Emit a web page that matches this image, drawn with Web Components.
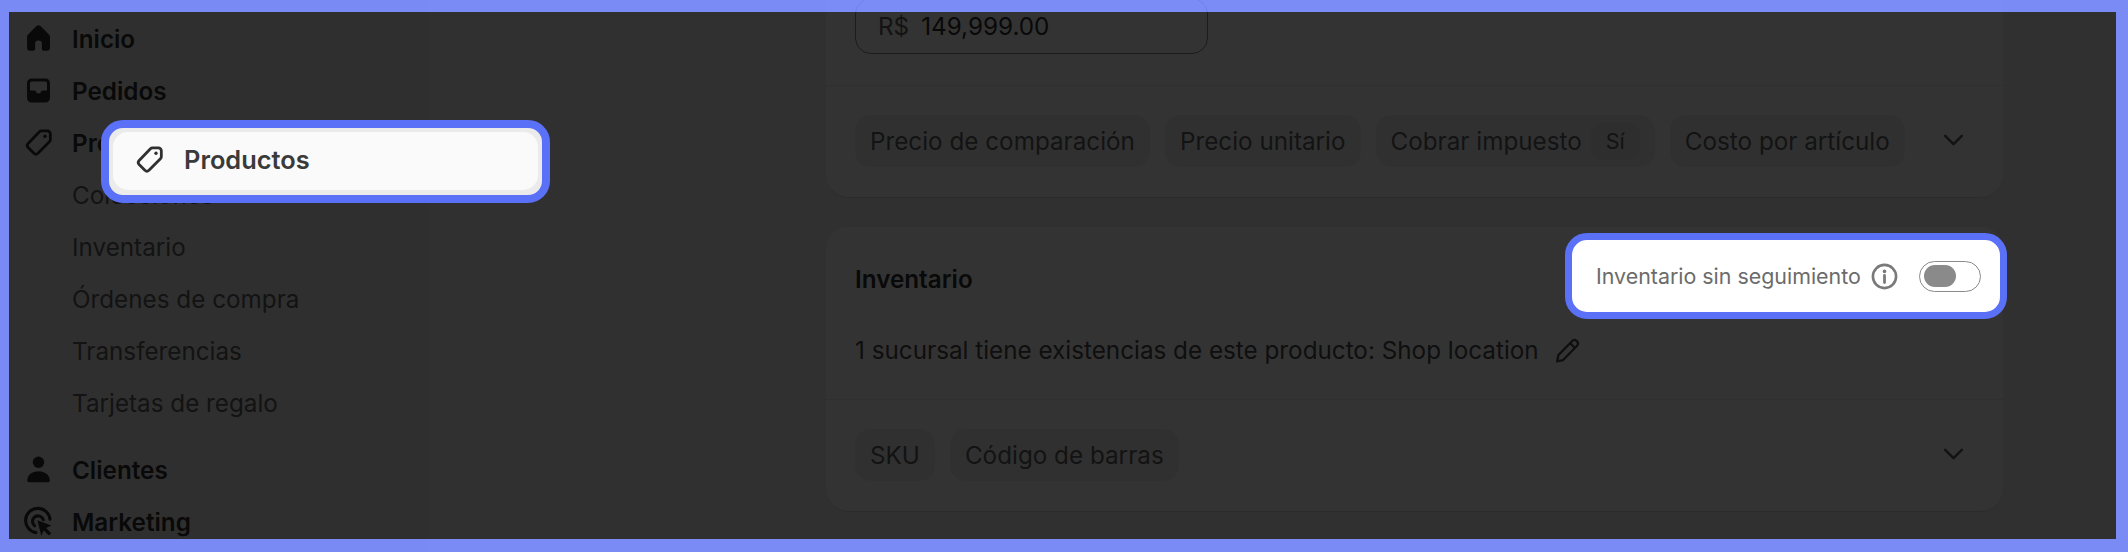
<!DOCTYPE html>
<html lang="es">
<head>
<meta charset="utf-8">
<title>Inventario</title>
<style>
  html, body { margin: 0; padding: 0; background: #f1f1f1; }
</style>
</head>
<body>

<tour-stage>
  <nav-sidebar slot="side">
    <nav-item strong icon="home">Inicio</nav-item>
    <nav-item strong icon="inbox">Pedidos</nav-item>
    <nav-item strong icon="tag">Productos</nav-item>
    <nav-item>Colecciones</nav-item>
    <nav-item>Inventario</nav-item>
    <nav-item>Órdenes de compra</nav-item>
    <nav-item>Transferencias</nav-item>
    <nav-item>Tarjetas de regalo</nav-item>
    <nav-item strong gap icon="person">Clientes</nav-item>
    <nav-item strong icon="target">Marketing</nav-item>
  </nav-sidebar>

  <product-card>
    <card-section first>
      <price-input currency="R$" value="149,999.00"></price-input>
    </card-section>
    <card-section divided>
      <chip-row>
        <pill-chip>Precio de comparación</pill-chip>
        <pill-chip>Precio unitario</pill-chip>
        <pill-chip badge="Sí">Cobrar impuesto</pill-chip>
        <pill-chip>Costo por artículo</pill-chip>
      </chip-row>
    </card-section>
  </product-card>

  <product-card>
    <card-section first tight>
      <inventory-head>Inventario</inventory-head>
      <inventory-line>1 sucursal tiene existencias de este producto: Shop location</inventory-line>
    </card-section>
    <card-section divided>
      <chip-row>
        <pill-chip>SKU</pill-chip>
        <pill-chip>Código de barras</pill-chip>
      </chip-row>
    </card-section>
  </product-card>

  <nav-callout slot="over">Productos</nav-callout>
  <toggle-callout slot="over">Inventario sin seguimiento</toggle-callout>
</tour-stage>

<script>
const ICONS = {
  home: `<path fill="currentColor" d="M8.6 3.5a2 2 0 0 1 2.8 0l4.1 4.2c.4.4.7.9.7 1.4v5.9a1.6 1.6 0 0 1-1.6 1.6h-1.8a1 1 0 0 1-1-1v-2.7a1.8 1.8 0 0 0-3.6 0v2.7a1 1 0 0 1-1 1H5.4a1.6 1.6 0 0 1-1.6-1.6V9.1c0-.5.3-1 .7-1.4z"/>`,
  inbox: `<path fill="currentColor" fill-rule="evenodd" d="M6.2 3.5h7.6a2.4 2.4 0 0 1 2.4 2.4v8.2a2.4 2.4 0 0 1-2.4 2.4H6.2a2.4 2.4 0 0 1-2.4-2.4V5.9a2.4 2.4 0 0 1 2.4-2.4zM6.3 5.1a.9.9 0 0 0-.9.9v4h2.8l1 1.5h1.6l1-1.5h2.8V6a.9.9 0 0 0-.9-.9z"/>`,
  tag: `<path fill="none" stroke="currentColor" stroke-width="1.5" stroke-linejoin="round" d="M11.6 3.7h3.2a1.6 1.6 0 0 1 1.6 1.6v3.2a1.6 1.6 0 0 1-.5 1.1l-6.2 6.2a1.6 1.6 0 0 1-2.2 0l-3.1-3.1a1.6 1.6 0 0 1 0-2.2l6.1-6.3a1.6 1.6 0 0 1 1.1-.5z"/><circle cx="13.5" cy="6.6" r=".9" fill="currentColor"/>`,
  person: `<circle cx="10" cy="6.1" r="3.1" fill="currentColor"/><path fill="currentColor" d="M3.9 15.9c0-3.1 2.7-5 6.1-5s6.1 1.9 6.1 5c0 .6-.4 1-1 1H4.9c-.6 0-1-.4-1-1z"/>`,
  target: `<path fill="none" stroke="currentColor" stroke-width="1.7" stroke-linecap="round" d="M8.6 16A6.6 6.6 0 1 1 16.2 8.8"/><path fill="none" stroke="currentColor" stroke-width="1.7" stroke-linecap="round" d="M7.9 12.3A3 3 0 1 1 12.6 9"/><path fill="currentColor" d="M9.4 9.3l7.6 2.9-2.9 1.3 2.8 2.8-1.3 1.3-2.8-2.8-1.3 2.9z"/>`
};

class TourStage extends HTMLElement {
  constructor() {
    super();
    this.attachShadow( {mode: 'open'} ).innerHTML = `
    <style>
    :host {
      display: block;
      position: relative;
      width: 2128px;
      height: 552px;
      overflow: hidden;
      font-family: Inter, 'Liberation Sans', sans-serif;
      color: #303030;
      background: #f1f1f1;
    }
    div.page {
      display: grid;
      grid-template-columns: 427px 1fr;
      height: 552px;
    }
    div.main {
      display: flex;
      flex-direction: column;
      gap: 30px;
      margin-top: -32px;
      padding: 0 125px 0 399px;
    }
    div.dim {
      background: rgba( 0, 0, 0, 0.8 );
      bottom: 13px;
      left: 9px;
      position: absolute;
      right: 12px;
      top: 12px;
    }
    div.frame {
      border-color: rgba( 110, 128, 246, 0.9 );
      border-style: solid;
      border-width: 12px 12px 13px 9px;
      inset: 0;
      position: absolute;
    }
    </style>
    <div class="page">
      <slot name="side"></slot>
      <div class="main"><slot></slot></div>
    </div>
    <div class="dim"></div>
    <div class="frame"></div>
    <slot name="over"></slot>
    `;
  }
}

class NavSidebar extends HTMLElement {
  constructor() {
    super();
    this.attachShadow( {mode: 'open'} ).innerHTML = `
    <style>
    :host {
      background: #ebebeb;
      box-sizing: border-box;
      display: flex;
      flex-direction: column;
      padding-top: 13px;
    }
    </style>
    <slot></slot>
    `;
  }
}

class NavItem extends HTMLElement {
  constructor() {
    super();
    const icon = this.getAttribute( 'icon' );
    this.attachShadow( {mode: 'open'} ).innerHTML = `
    <style>
    :host {
      align-items: center;
      display: flex;
      flex-shrink: 0;
      font-size: 24.25px;
      color: #616161;
      height: 52px;
      padding-left: 72px;
      position: relative;
    }
    :host( [strong] ) {
      color: #303030;
      font-weight: 600;
    }
    :host( [gap] ) {
      margin-top: 15px;
    }
    svg {
      color: #303030;
      height: 37px;
      left: 20px;
      position: absolute;
      top: 7px;
      width: 37px;
    }
    </style>
    ${icon ? `<svg viewBox="0 0 20 20">${ICONS[icon]}</svg>` : ''}
    <slot></slot>
    `;
  }
}

class ProductCard extends HTMLElement {
  constructor() {
    super();
    this.attachShadow( {mode: 'open'} ).innerHTML = `
    <style>
    :host {
      background: #ffffff;
      border-radius: 22px;
      box-shadow: 0 1px 0 rgba( 0, 0, 0, 0.1 );
      display: block;
      flex-shrink: 0;
      overflow: hidden;
    }
    </style>
    <slot></slot>
    `;
  }
}

class CardSection extends HTMLElement {
  constructor() {
    super();
    this.attachShadow( {mode: 'open'} ).innerHTML = `
    <style>
    :host {
      display: block;
      padding: 29px 29px 31px 29px;
    }
    :host( [first] ) {
      padding-top: 30px;
    }
    :host( [tight] ) {
      padding-bottom: 29px;
    }
    :host( [divided] ) {
      border-top: solid 1px #ebebeb;
      padding-bottom: 30px;
    }
    </style>
    <slot></slot>
    `;
  }
}

class PriceInput extends HTMLElement {
  constructor() {
    super();
    this.attachShadow( {mode: 'open'} ).innerHTML = `
    <style>
    :host {
      align-items: center;
      border: solid 1px #8a8a8a;
      border-radius: 16px;
      box-sizing: border-box;
      display: flex;
      font-size: 24.25px;
      gap: 12px;
      height: 56px;
      padding-left: 22px;
      width: 353px;
    }
    span { color: #616161; }
    </style>
    <span>${this.getAttribute( 'currency' )}</span>
    <div>${this.getAttribute( 'value' )}</div>
    `;
  }
}

class ChipRow extends HTMLElement {
  constructor() {
    super();
    this.attachShadow( {mode: 'open'} ).innerHTML = `
    <style>
    :host {
      align-items: center;
      display: flex;
      gap: 15px;
      height: 52px;
      position: relative;
    }
    svg {
      color: #616161;
      height: 37px;
      left: 1080px;
      position: absolute;
      top: 6px;
      width: 37px;
    }
    </style>
    <slot></slot>
    <svg viewBox="0 0 20 20"><path fill="none" stroke="currentColor" stroke-width="1.4" stroke-linecap="round" stroke-linejoin="round" d="M5.5 8l4.5 4.5L14.5 8"/></svg>
    `;
  }
}

class PillChip extends HTMLElement {
  constructor() {
    super();
    const badge = this.getAttribute( 'badge' );
    this.attachShadow( {mode: 'open'} ).innerHTML = `
    <style>
    :host {
      align-items: center;
      background: #f1f1f1;
      border-radius: 15px;
      box-sizing: border-box;
      color: #616161;
      display: flex;
      font-size: 24.25px;
      gap: 9px;
      height: 52px;
      padding: 0 15px;
    }
    span {
      align-items: center;
      background: #e3e3e3;
      border-radius: 11px;
      display: flex;
      font-size: 21.5px;
      height: 37px;
      justify-content: center;
      width: 49px;
    }
    </style>
    <slot></slot>
    ${badge ? `<span>${badge}</span>` : ''}
    `;
  }
}

class InventoryHead extends HTMLElement {
  constructor() {
    super();
    this.attachShadow( {mode: 'open'} ).innerHTML = `
    <style>
    :host {
      align-items: center;
      display: flex;
      font-size: 24.25px;
      font-weight: 600;
      height: 45px;
      margin-bottom: 28px;
    }
    </style>
    <slot></slot>
    `;
  }
}

class InventoryLine extends HTMLElement {
  constructor() {
    super();
    this.attachShadow( {mode: 'open'} ).innerHTML = `
    <style>
    :host {
      align-items: center;
      color: #4a4a4a;
      display: flex;
      font-size: 24.25px;
      gap: 15px;
      height: 40px;
    }
    svg { height: 27px; width: 27px; color: #4a4a4a; }
    </style>
    <slot></slot>
    <svg viewBox="0 0 26 26"><path fill="none" stroke="currentColor" stroke-width="2.2" stroke-linejoin="round" d="M3 23.5l1.2-6L17.6 3.8a3 3 0 0 1 4.2 0l.4.4a3 3 0 0 1 0 4.2L8.8 22.2zM15.6 6l4.4 4.4"/></svg>
    `;
  }
}

class NavCallout extends HTMLElement {
  constructor() {
    super();
    this.attachShadow( {mode: 'open'} ).innerHTML = `
    <style>
    :host {
      background: #ebebeb;
      border: solid 8.5px #5a70f7;
      border-radius: 22px;
      box-sizing: border-box;
      display: flex;
      height: 83px;
      left: 101px;
      padding: 4px 4px 5px 4px;
      position: absolute;
      top: 120px;
      width: 449px;
    }
    div.row {
      align-items: center;
      background: #fafafa;
      border-radius: 15px;
      color: #3a3a3a;
      display: flex;
      flex-grow: 1;
      font-size: 25.4px;
      font-weight: 600;
      gap: 16px;
      padding: 0 0 4px 18px;
    }
    svg { height: 37px; width: 37px; color: #303030; }
    </style>
    <div class="row">
      <svg viewBox="0 0 20 20">${ICONS.tag}</svg>
      <slot></slot>
    </div>
    `;
  }
}

class ToggleCallout extends HTMLElement {
  constructor() {
    super();
    this.attachShadow( {mode: 'open'} ).innerHTML = `
    <style>
    :host {
      align-items: center;
      background: #ffffff;
      border: solid 7.5px #5a70f7;
      border-radius: 22px;
      box-sizing: border-box;
      color: #6b6b6b;
      display: flex;
      font-size: 21.4px;
      height: 86px;
      left: 1565px;
      padding-left: 24px;
      position: absolute;
      top: 233px;
      width: 442px;
    }
    svg.info {
      color: #7a7a7a;
      height: 27px;
      margin-left: 10px;
      width: 27px;
    }
    div.toggle {
      border: solid 1px #8a8a8a;
      border-radius: 16px;
      box-sizing: border-box;
      display: flex;
      align-items: center;
      height: 31px;
      margin-left: 21px;
      padding-left: 4px;
      width: 62px;
    }
    div.knob {
      background: #8a8a8a;
      border-radius: 11px;
      height: 22px;
      width: 32px;
    }
    </style>
    <slot></slot>
    <svg class="info" viewBox="0 0 27 27">
      <circle cx="13.5" cy="13.5" r="11.6" fill="none" stroke="currentColor" stroke-width="2.6"/>
      <circle cx="13.5" cy="8.4" r="1.8" fill="currentColor"/>
      <path d="M13.5 12.5v7" stroke="currentColor" stroke-width="2.8" stroke-linecap="round"/>
    </svg>
    <div class="toggle"><div class="knob"></div></div>
    `;
  }
}

window.customElements.define( 'tour-stage', TourStage );
window.customElements.define( 'nav-sidebar', NavSidebar );
window.customElements.define( 'nav-item', NavItem );
window.customElements.define( 'product-card', ProductCard );
window.customElements.define( 'card-section', CardSection );
window.customElements.define( 'price-input', PriceInput );
window.customElements.define( 'chip-row', ChipRow );
window.customElements.define( 'pill-chip', PillChip );
window.customElements.define( 'inventory-head', InventoryHead );
window.customElements.define( 'inventory-line', InventoryLine );
window.customElements.define( 'nav-callout', NavCallout );
window.customElements.define( 'toggle-callout', ToggleCallout );
</script>
</body>
</html>
